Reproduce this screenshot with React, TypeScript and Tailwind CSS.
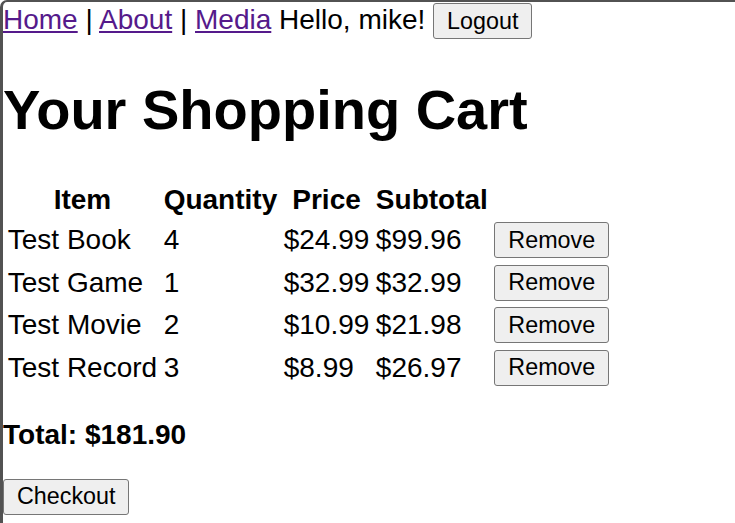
import React from "react";

const items = [
  { name: "Test Book", qty: 4, price: "$24.99", sub: "$99.96" },
  { name: "Test Game", qty: 1, price: "$32.99", sub: "$32.99" },
  { name: "Test Movie", qty: 2, price: "$10.99", sub: "$21.98" },
  { name: "Test Record", qty: 3, price: "$8.99", sub: "$26.97" },
];

function Btn({ children }: { children: React.ReactNode }) {
  return (
    <button className="inline-block bg-[#efefef] border border-[#767676] rounded-[3px] px-[13px] py-[3.5px] text-[23.3px] leading-[normal] text-black font-['Liberation_Sans',Arial,sans-serif]">
      {children}
    </button>
  );
}

export default function App() {
  return (
    <div className="min-h-[523px] w-[735px] bg-white border-t-2 border-l-[3px] border-[#525252] rounded-tl-[7px] font-['Liberation_Sans',Arial,sans-serif] text-[28px] leading-[normal] text-black overflow-hidden">
      <div className="pt-[1px]">
        <a href="#" className="text-[#551a8b] underline">Home</a> |{" "}
        <a href="#" className="text-[#551a8b] underline">About</a> |{" "}
        <a href="#" className="text-[#551a8b] underline">Media</a> Hello, mike!{" "}
        <Btn>Logout</Btn>
      </div>
      <h1 className="text-[56px] font-bold leading-[normal] my-[37.5px]">Your Shopping Cart</h1>
      <table className="border-separate border-spacing-[3.5px]">
        <thead>
          <tr>
            <th className="p-[1.75px] font-bold text-center">Item</th>
            <th className="p-[1.75px] font-bold text-center">Quantity</th>
            <th className="p-[1.75px] font-bold text-center">Price</th>
            <th className="p-[1.75px] font-bold text-center">Subtotal</th>
            <th className="p-[1.75px]"></th>
          </tr>
        </thead>
        <tbody>
          {items.map((it) => (
            <tr key={it.name}>
              <td className="p-[1.75px] text-left">{it.name}</td>
              <td className="p-[1.75px] text-left">{it.qty}</td>
              <td className="p-[1.75px] text-left">{it.price}</td>
              <td className="p-[1.75px] text-left">{it.sub}</td>
              <td className="p-[1.75px] text-left">
                <Btn>Remove</Btn>
              </td>
            </tr>
          ))}
        </tbody>
      </table>
      <p className="my-[28px]">
        <strong className="font-bold">Total: $181.90</strong>
      </p>
      <div>
        <Btn>Checkout</Btn>
      </div>
    </div>
  );
}
